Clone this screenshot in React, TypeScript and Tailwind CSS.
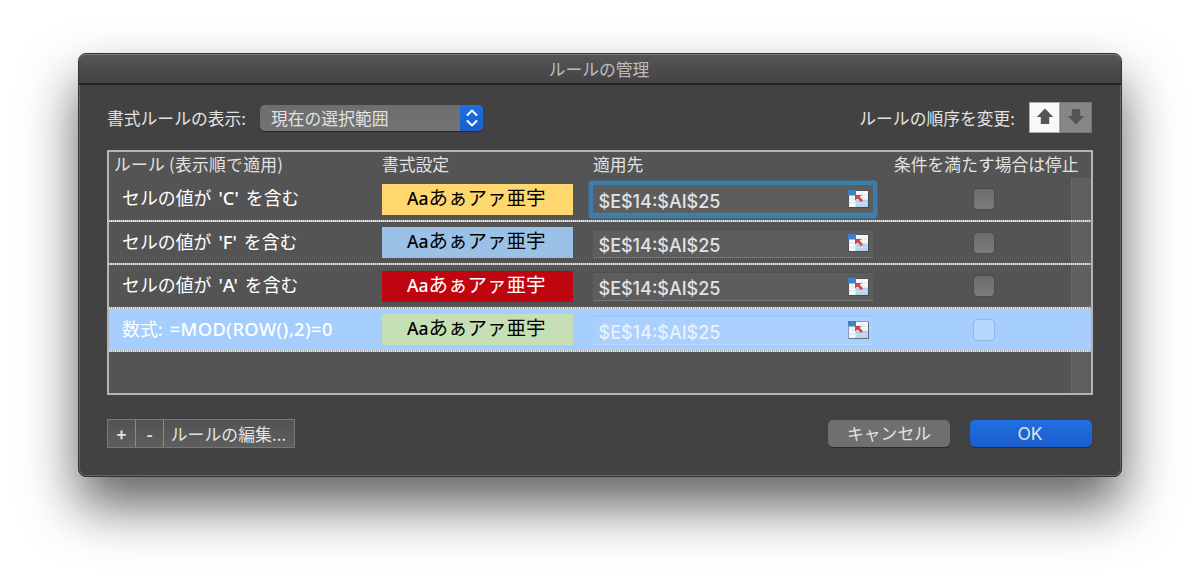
import React, { useState } from 'react'

type Rule = { latin?: string; text?: string; color: string; ink: string; range: string }

const RULES: Rule[] = [
  { latin: "'C'", color: 'bg-[#ffd76f]', ink: 'text-black', range: '$E$14:$AI$25' },
  { latin: "'F'", color: 'bg-[#9bc2e6]', ink: 'text-black', range: '$E$14:$AI$25' },
  { latin: "'A'", color: 'bg-[#bf0510]', ink: 'text-white', range: '$E$14:$AI$25' },
  { text: '=MOD(ROW(),2)=0', color: 'bg-[#c6dfb4]', ink: 'text-black', range: '$E$14:$AI$25' },
]

const RangeIcon = () => (
  <svg width="21" height="18" viewBox="0 0 21 18" className="shrink-0">
    <rect x="0.5" y="0.5" width="20.5" height="17.5" fill="#3f4750" opacity="0.7" />
    <rect x="1" y="1" width="19" height="16" fill="#f6f8fa" />
    <path d="M1 9h19M1 13h19M8 5h12M7.5 5v12M14 1v16" stroke="#d5dce3" strokeWidth="0.8" />
    <rect x="8" y="10" width="12" height="7" fill="#b9d1ec" />
    <path d="M8 13.5h12M14 10v7" stroke="#d5e3f3" strokeWidth="0.8" />
    <rect x="0" y="0" width="8" height="5.5" fill="#3f7fc4" />
    <path d="M7 5h6.5l-1.8 1.8 3.3 3.6-2 1.6-3.3-3.5L7 10.5z" fill="#c8484c" />
  </svg>
)

const Arrow = ({ down = false }: { down?: boolean }) => (
  <svg width="18" height="17" viewBox="0 0 18 17" className={down ? 'rotate-180' : ''}>
    <path d="M9 0.5l8.2 8.5H13.2v7h-8.4V9H0.8z" fill="#555" />
  </svg>
)

const RuleRow = ({ rule, selected, focused, onSelect }: {
  rule: Rule; selected: boolean; focused: boolean; onSelect: () => void
}) => (
  <div
    onClick={onSelect}
    className={`relative flex h-[43.6px] shrink-0 ${selected ? 'bg-[#a5cdfd]' : ''}`}
  >
    <div className="w-[272.5px] shrink-0 whitespace-nowrap pl-[13px] pt-[5px] text-[17.9px] leading-[28px] text-white">
      {rule.text ? (
        <span>数式:<span className="ml-[7px] font-['Noto_Sans'] text-[18.3px] font-medium tracking-[0.4px]">{rule.text}</span></span>
      ) : (
        <span>セルの値が<span className="mx-[7px] font-['Noto_Sans'] text-[18.3px] font-medium">{rule.latin}</span>を含む</span>
      )}
    </div>

    <div className={`mt-[5.5px] h-[31px] w-[191px] shrink-0 whitespace-nowrap pl-[25.5px] text-[19.5px] leading-[26px] ${rule.color} ${rule.ink}`}>
      <span className="font-['Noto_Sans'] text-[17.5px] font-medium">Aa</span>あぁアァ亜宇
    </div>

    <div
      className={`ml-[20px] mt-[7px] flex h-[29px] w-[280px] shrink-0 items-center justify-between border-b pl-[6px] pr-[4px] pt-[2px] ${
        focused
          ? 'rounded-[1px] border-[#777] bg-[#5d5d5d] shadow-[0_0_0_4.5px_#3c7dab]'
          : selected
            ? 'border-[#b9d8fd] border-t border-t-[#9dc4f2] bg-[#abd0fd]'
            : 'border-[#757575] border-t border-t-[#505050] bg-[#5d5d5d]'
      }`}
    >
      <span className={`pt-[3px] font-['Inter'] text-[18px] font-medium leading-[20px] ${selected ? 'text-[#e8f2fe]' : 'text-[#e3e3e3]'}`}>{rule.range}</span>
      <span className="pb-[2px]"><RangeIcon /></span>
    </div>

    <div className="flex flex-1 pl-[101.5px] pt-[11px]">
      <span
        className={`block size-[20px] rounded-[4px] ${
          selected
            ? 'bg-[#b6d6fd] shadow-[0_0_1px_1px_rgba(100,140,190,0.35)]'
            : 'bg-linear-to-b from-[#6c6c6c] to-[#7c7c7c] shadow-[0_0_1px_1px_rgba(60,60,60,0.3)]'
        }`}
      />
    </div>

    {/* scroller gutter */}
    <div className={`w-[20px] shrink-0 border-l ${selected ? 'border-[#b0cffa] bg-[#a8ccfb]' : 'border-[#696969] bg-[#5f5f5f]'}`} />
    <div className="absolute inset-x-0 bottom-0 h-[2px] bg-[repeating-linear-gradient(90deg,#e6e6e6_0_1px,#a8a8a8_1px_2px)]" />
  </div>
)

export default function App() {
  const [selected, setSelected] = useState(3)

  return (
    <div className="h-[580px] w-[1200px] overflow-hidden bg-white pl-[78px] pt-[53px] font-['Noto_Sans_CJK_JP',sans-serif] text-[16.8px] text-[#e2e2e2]">
      <div className="flex h-[424px] w-[1044px] flex-col rounded-[8px] border border-[#333] bg-[#424242] shadow-[inset_0_0_0_1px_#666,0_29px_54px_rgba(0,0,0,0.62)]">
        <div className="flex h-[31px] shrink-0 items-center justify-center rounded-t-[7px] border-b-2 border-b-[#252525] border-t border-t-[#7d7d7d] bg-linear-to-b from-[#555] to-[#444] pr-[2px] pt-[1px] text-[#bdbdbd]">
          ルールの管理
        </div>

        <div className="flex h-[65px] shrink-0 items-center pl-[28px] pr-[29px] pt-px">
          <span className="w-[153px] pt-[1px]">書式ルールの表示:</span>
          <div className="flex h-[26px] w-[223px] overflow-hidden rounded-[5px] bg-linear-to-b from-[#6e6e6e] to-[#737373] shadow-[0_1px_1px_rgba(0,0,0,0.4)]">
            <span className="flex-1 pl-[11px] leading-[26px]">現在の選択範囲</span>
            <span className="flex w-[23px] items-center justify-center bg-linear-to-b from-[#2170e3] to-[#1b5dcb]">
              <svg width="12" height="18" viewBox="0 0 12 18" fill="none" stroke="#fff" strokeWidth="1.9" strokeLinecap="round" strokeLinejoin="round">
                <path d="M1.5 6L6 1.5 10.5 6M1.5 12L6 16.5 10.5 12" />
              </svg>
            </span>
          </div>
          <span className="ml-auto mr-[14px] pt-[1px]">ルールの順序を変更:</span>
          <button className="mb-[1px] flex size-[31px] items-center justify-center border border-[#aaa] bg-[#f8f8f8] pb-[2px]">
            <Arrow />
          </button>
          <button className="mb-[1px] flex h-[31px] w-[32px] items-center justify-center border border-[#777] bg-[#868686] pb-[2px]">
            <Arrow down />
          </button>
        </div>

        <div className="ml-[28px] flex h-[245px] w-[986px] shrink-0 flex-col border-2 border-[#b4b4b4] bg-[#545454]">
          <div className="flex h-[26px] shrink-0 whitespace-nowrap pl-[5px] leading-[25px]">
            <span className="w-[268px] tracking-[0.25px]">ルール (表示順で適用)</span>
            <span className="w-[211px]">書式設定</span>
            <span className="w-[301px]">適用先</span>
            <span>条件を満たす場合は停止</span>
          </div>
          {RULES.map((rule, i) => (
            <RuleRow key={i} rule={rule} selected={selected === i} focused={i === 0} onSelect={() => setSelected(i)} />
          ))}
          <div className="flex flex-1 justify-end">
            <div className="w-[20px] border-l border-[#696969] bg-[#5f5f5f]" />
          </div>
        </div>

        <div className="flex items-start pl-[28px] pr-[29px] pt-[24px]">
          <div className="flex h-[29px] border border-[#777] bg-linear-to-b from-[#535353] to-[#5e5e5e] leading-[28px]">
            <button className="w-[28px] border-r border-[#8b8b8b] font-bold">+</button>
            <button className="w-[28px] border-r border-[#8b8b8b] font-bold">-</button>
            <button className="w-[130px] pr-[1px] tracking-[0.1px]">ルールの編集...</button>
          </div>
          <button className="ml-auto mt-[1px] h-[27px] w-[122px] rounded-[5px] bg-[#6f6f6f] leading-[27px] shadow-[0_1px_1px_rgba(0,0,0,0.4)]">キャンセル</button>
          <button className="ml-[20px] mt-[1px] h-[27px] w-[122px] rounded-[5px] bg-linear-to-b from-[#2170e3] to-[#1b5dcb] pr-[2px] pt-[1px] font-['Inter'] text-[17.5px] leading-[26px] shadow-[0_1px_1px_rgba(0,0,0,0.4)]">OK</button>
        </div>
      </div>
    </div>
  )
}
